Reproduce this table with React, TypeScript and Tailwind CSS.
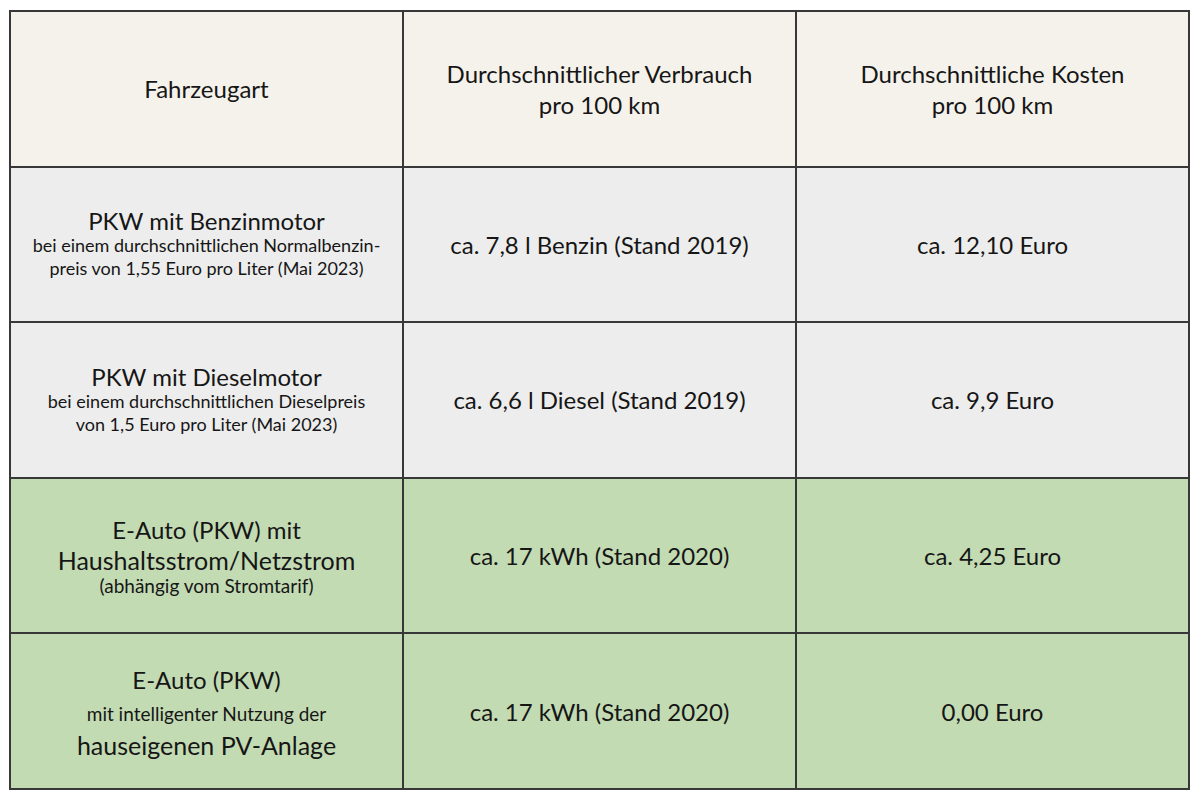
import React from "react";

type Row = {
    bg: string;
    label: React.ReactNode;
    usage: string;
    cost: string;
};

const rows: Row[] = [
    {
        bg: "bg-[#ededed]",
        label: (
            <>
                <div className="text-[24px] leading-[26px]">PKW mit Benzinmotor</div>
                <div className="text-[18px] leading-[23px]">bei einem durchschnittlichen Normalbenzin-</div>
                <div className="text-[18px] leading-[23px]">preis von 1,55 Euro pro Liter (Mai 2023)</div>
            </>
        ),
        usage: "ca. 7,8 l Benzin (Stand 2019)",
        cost: "ca. 12,10 Euro",
    },
    {
        bg: "bg-[#ededed]",
        label: (
            <>
                <div className="text-[24px] leading-[26px]">PKW mit Dieselmotor</div>
                <div className="text-[18px] leading-[23px]">bei einem durchschnittlichen Dieselpreis</div>
                <div className="text-[18px] leading-[23px]">von 1,5 Euro pro Liter (Mai 2023)</div>
            </>
        ),
        usage: "ca. 6,6 l Diesel (Stand 2019)",
        cost: "ca. 9,9 Euro",
    },
    {
        bg: "bg-[#c3dbb3]",
        label: (
            <>
                <div className="text-[24px] leading-[30px]">E-Auto (PKW) mit</div>
                <div className="text-[25px] leading-[30px]">Haushaltsstrom/Netzstrom</div>
                <div className="text-[19px] leading-[22px]">(abhängig vom Stromtarif)</div>
            </>
        ),
        usage: "ca. 17 kWh (Stand 2020)",
        cost: "ca. 4,25 Euro",
    },
    {
        bg: "bg-[#c3dbb3]",
        label: (
            <>
                <div className="text-[24px] leading-[32px]">E-Auto (PKW)</div>
                <div className="text-[19px] leading-[35px]">mit intelligenter Nutzung der</div>
                <div className="text-[25px] leading-[28px]">hauseigenen PV-Anlage</div>
            </>
        ),
        usage: "ca. 17 kWh (Stand 2020)",
        cost: "0,00 Euro",
    },
];

const Cell: React.FC<{ bg: string; children: React.ReactNode }> = ({ bg, children }) => (
    <div className={`${bg} flex flex-col items-center justify-center text-center`}>{children}</div>
);

const App: React.FC = () => {
    return (
        <div className="w-[1200px] h-[801px] bg-white pt-[10px] pl-[9px] text-[#161616] font-['Lato',sans-serif]">
            <div className="w-[1181px] h-[780px] bg-[#383838] p-[2px] grid grid-cols-3 grid-rows-5 gap-[2px]">
                <Cell bg="bg-[#f5f2eb]">
                    <div className="text-[24px] leading-[31px]">Fahrzeugart</div>
                </Cell>
                <Cell bg="bg-[#f5f2eb]">
                    <div className="text-[24px] leading-[31px]">Durchschnittlicher Verbrauch</div>
                    <div className="text-[24px] leading-[31px]">pro 100 km</div>
                </Cell>
                <Cell bg="bg-[#f5f2eb]">
                    <div className="text-[24px] leading-[31px]">Durchschnittliche Kosten</div>
                    <div className="text-[24px] leading-[31px]">pro 100 km</div>
                </Cell>

                {rows.map((row, index) => (
                    <React.Fragment key={index}>
                        <Cell bg={row.bg}>{row.label}</Cell>
                        <Cell bg={row.bg}>
                            <div className="text-[24px] leading-[31px]">{row.usage}</div>
                        </Cell>
                        <Cell bg={row.bg}>
                            <div className="text-[24px] leading-[31px]">{row.cost}</div>
                        </Cell>
                    </React.Fragment>
                ))}
            </div>
        </div>
    );
};

export default App;
